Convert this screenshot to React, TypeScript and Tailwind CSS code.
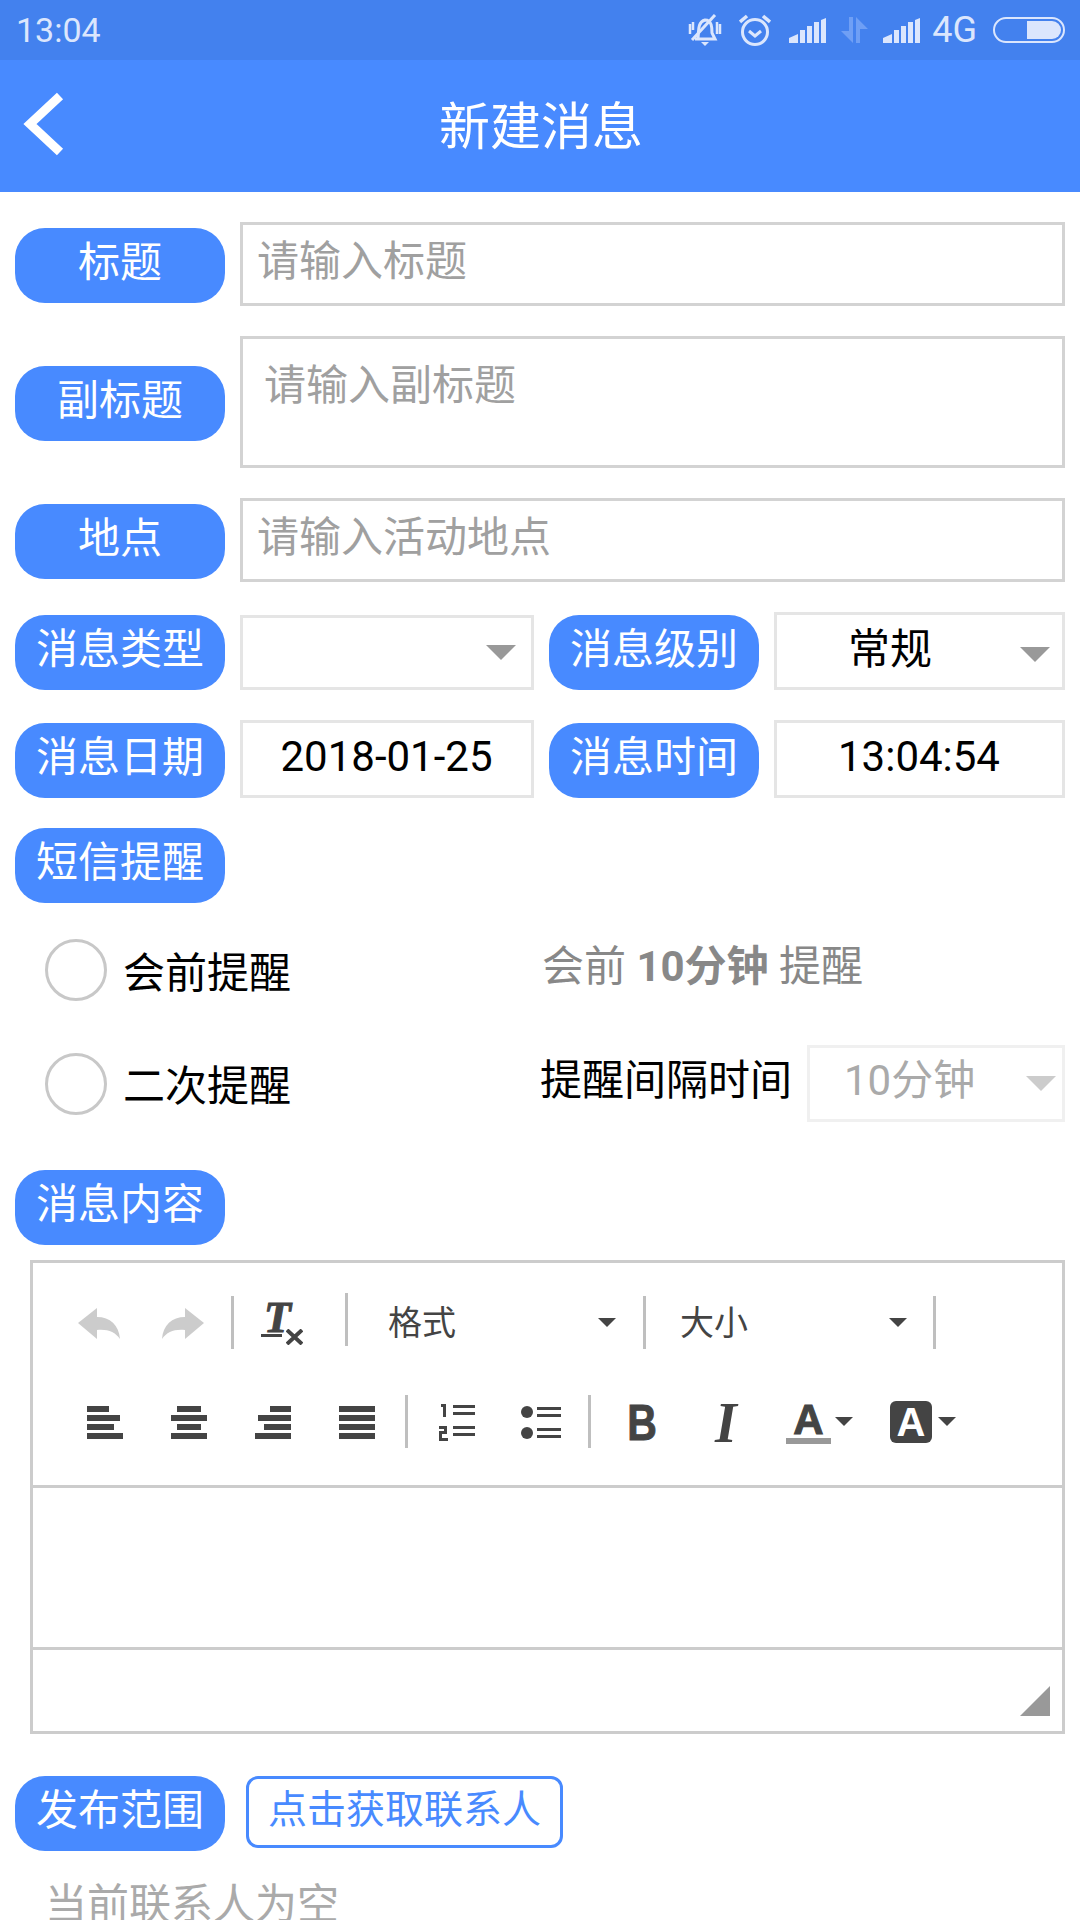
import React from "react";

function Label({ text, className = "" }: { text: string; className?: string }) {
  return (
    <div className={"flex h-[75px] w-[210px] shrink-0 items-center justify-center rounded-[30px] bg-[#488aff] pb-[6px] text-[42px] leading-none text-white " + className}>
      {text}
    </div>
  );
}

function Arrow({ color = "#999999" }: { color?: string }) {
  return (
    <svg width="30" height="15" viewBox="0 0 30 15" className="shrink-0">
      <polygon points="0,0 30,0 15,15" fill={color} />
    </svg>
  );
}

function Caret() {
  return (
    <svg width="18" height="9" viewBox="0 0 18 9" className="shrink-0">
      <polygon points="0,0 18,0 9,9" fill="#444444" />
    </svg>
  );
}

function Sep({ className = "" }: { className?: string }) {
  return <div className={"h-[53px] w-[3px] shrink-0 bg-[#bfbfbf] " + className} />;
}

function Bars({ widths, align }: { widths: number[]; align: "l" | "c" | "r" }) {
  return (
    <svg width="36" height="33" viewBox="0 0 36 33">
      {widths.map((w, i) => (
        <rect key={i} x={align === "l" ? 0 : align === "c" ? (36 - w) / 2 : 36 - w} y={i * 9} width={w} height="6" fill="#444444" />
      ))}
    </svg>
  );
}

function Btn({ children, className = "w-[84px]" }: { children: React.ReactNode; className?: string }) {
  return <div className={"flex h-[53px] shrink-0 items-center justify-center pt-[2px] " + className}>{children}</div>;
}

function Signal() {
  return (
    <svg width="37" height="25" viewBox="0 0 37 25" fill="#dbe6fd">
      <polygon points="0,25 0,20 9,16 9,25" />
      <rect x="11" y="12" width="5" height="13" />
      <rect x="18" y="8" width="5" height="17" />
      <rect x="25" y="4" width="5" height="21" />
      <polygon points="32,2 37,0 37,25 32,25" />
    </svg>
  );
}

export default function App() {
  return (
    <div className="h-[1920px] w-[1080px] overflow-hidden bg-white font-['Roboto','Noto_Sans_CJK_SC',sans-serif] text-black">
      {/* status bar */}
      <div className="flex h-[60px] items-center justify-between bg-[#4381ee] pl-[16px] pr-[15px] text-[#dbe6fd]">
        <span className="text-[34px] leading-none">13:04</span>
        <div className="flex items-center">
          <svg width="34" height="32" viewBox="0 0 34 32" fill="none" stroke="#dbe6fd">
            <path d="M10 24 C11 18 9 8 17 6 C24 6 24 14 24 19 L27 25 L7 25" strokeWidth="3" />
            <path d="M13 28 H21 L17 32 Z" fill="#dbe6fd" stroke="none" />
            <path d="M4 26 L27 1" strokeWidth="3" />
            <path d="M2 10 V20 M5 8 V16 M29 8 V20 M32 10 V20" strokeWidth="2.5" />
          </svg>
          <svg width="32" height="32" viewBox="0 0 32 32" fill="none" stroke="#dbe6fd" strokeWidth="3" className="ml-[17px]">
            <circle cx="16" cy="18" r="12.5" />
            <path d="M10 17 L16 22 L22 17" />
            <path d="M1 8 L8 2 M31 8 L24 2" strokeWidth="3.5" />
          </svg>
          <div className="ml-[18px]"><Signal /></div>
          <svg width="27" height="26" viewBox="0 0 27 26" fill="#6f9ff5" className="ml-[15px]">
            <polygon points="8,0 12,0 12,26 0,14 8,14" />
            <polygon points="15,0 27,12 19,12 19,26 15,26" />
          </svg>
          <div className="ml-[15px]"><Signal /></div>
          <span className="ml-[12px] text-[36px] leading-none">4G</span>
          <div className="ml-[16px] flex h-[26px] w-[72px] items-center justify-end rounded-[13px] border-[2px] border-[#dbe6fd] pr-[2px]">
            <div className="h-[18px] w-[34px] rounded-r-[9px] bg-[#dbe6fd]" />
          </div>
        </div>
      </div>

      {/* header */}
      <div className="grid h-[132px] grid-cols-[1fr_auto_1fr] items-center bg-[#488aff]">
        <svg width="42" height="64" viewBox="0 0 42 64" fill="none" stroke="#ffffff" strokeWidth="9" className="mb-[4px] ml-[23px]">
          <path d="M37 4 L7 32 L37 60" />
        </svg>
        <span className="pl-[2px] pt-[2px] text-[51px] leading-none text-white">新建消息</span>
        <span />
      </div>

      <div className="flex flex-col px-[15px]">
        <div className="mt-[30px] flex h-[84px] items-start gap-[15px]">
          <Label text="标题" className="mt-[6px]" />
          <div className="flex h-[84px] flex-1 items-center border-[3px] border-[#d3d3d3] pb-[4px] pl-[14px] text-[42px] leading-none text-[#a0a0a0]">请输入标题</div>
        </div>

        <div className="mt-[30px] flex h-[132px] items-start gap-[15px]">
          <Label text="副标题" className="mt-[30px]" />
          <div className="h-[132px] flex-1 border-[3px] border-[#d3d3d3] pl-[21px] pt-[26px] text-[42px] leading-none text-[#a0a0a0]">请输入副标题</div>
        </div>

        <div className="mt-[30px] flex h-[84px] items-start gap-[15px]">
          <Label text="地点" className="mt-[6px]" />
          <div className="flex h-[84px] flex-1 items-center border-[3px] border-[#d3d3d3] pb-[4px] pl-[14px] text-[42px] leading-none text-[#a0a0a0]">请输入活动地点</div>
        </div>

        <div className="mt-[30px] flex h-[78px] items-end">
          <Label text="消息类型" />
          <div className="ml-[15px] flex h-[75px] w-[294px] items-center justify-end border-[3px] border-[#e5e5e5] pr-[15px]"><Arrow /></div>
          <Label text="消息级别" className="ml-[15px]" />
          <div className="ml-[15px] flex h-[78px] w-[291px] items-center justify-between border-[3px] border-[#e5e5e5] pl-[71px] pr-[12px]">
            <span className="pb-[3px] text-[42px] leading-none">常规</span>
            <span className="pt-[6px]"><Arrow /></span>
          </div>
        </div>

        <div className="mt-[30px] flex h-[78px] items-end">
          <Label text="消息日期" />
          <div className="ml-[15px] flex h-[78px] w-[294px] items-center justify-center border-[3px] border-[#e5e5e5] pb-[4px] pr-[1px] text-[42px] leading-none">2018-01-25</div>
          <Label text="消息时间" className="ml-[15px]" />
          <div className="ml-[15px] flex h-[78px] w-[291px] items-center justify-center border-[3px] border-[#e5e5e5] pb-[4px] pr-[1px] text-[42px] leading-none">13:04:54</div>
        </div>

        <div className="mt-[30px]"><Label text="短信提醒" /></div>

        <div className="mt-[36px] flex h-[62px] items-center pl-[30px]">
          <div className="h-[62px] w-[62px] shrink-0 rounded-full border-[3px] border-[#c8c8c8]" />
          <span className="ml-[16px] mt-[7px] w-[419px] text-[42px] leading-none">会前提醒</span>
          <span className="mb-[7px] whitespace-pre text-[42px] leading-none text-[#888888]">会前 <b className="font-bold">10分钟</b> 提醒</span>
        </div>

        <div className="mt-[44px] flex h-[77px] items-center pl-[30px]">
          <div className="h-[62px] w-[62px] shrink-0 rounded-full border-[3px] border-[#c8c8c8]" />
          <span className="ml-[16px] mt-[7px] w-[417px] text-[42px] leading-none">二次提醒</span>
          <span className="mb-[6px] shrink-0 whitespace-nowrap text-[42px] leading-none">提醒间隔时间</span>
          <div className="ml-[15px] flex h-[77px] w-[258px] shrink-0 items-center justify-between border-[3px] border-[#f0f0f0] pl-[34px] pr-[6px]">
            <span className="pb-[6px] text-[42px] leading-none text-[#aaaaaa]">10分钟</span>
            <Arrow color="#cccccc" />
          </div>
        </div>

        <div className="mt-[48px]"><Label text="消息内容" /></div>

        {/* editor */}
        <div className="ml-[15px] mt-[15px] h-[474px] border-[3px] border-[#cccccc]">
          <div className="h-[225px] border-b-[3px] border-[#cccccc] pt-[33px]">
            <div className="flex items-center pl-[24px]">
              <Btn>
                <svg width="42" height="31" viewBox="0 0 42 31" fill="#cccccc"><path d="M0 15 L19 0 V9 C32 9 41 17 42 31 C37 24 30 21 19 22 V31 Z" /></svg>
              </Btn>
              <Btn>
                <svg width="42" height="31" viewBox="0 0 42 31" fill="#cccccc"><path d="M42 15 L23 0 V9 C10 9 1 17 0 31 C5 24 12 21 23 22 V31 Z" /></svg>
              </Btn>
              <Sep className="ml-[6px]" />
              <Btn className="ml-[6px] w-[84px]">
                <div className="relative h-[42px] w-[42px]">
                  <span className="absolute left-[3px] top-[-7px] font-['Liberation_Serif',serif] text-[44px] font-bold italic leading-none text-[#444444] [-webkit-text-stroke:1px_#444444]">T</span>
                  <div className="absolute bottom-[8px] left-0 h-[3px] w-[21px] bg-[#444444]" />
                  <svg width="17" height="16" viewBox="0 0 17 16" className="absolute bottom-0 right-0" stroke="#444444" strokeWidth="4"><path d="M1 1 L16 15 M16 1 L1 15" /></svg>
                </div>
              </Btn>
              <Sep className="ml-[21px] -mt-[6px]" />
              <div className="flex h-[53px] w-[295px] shrink-0 items-center justify-between pl-[40px] pr-[27px]">
                <span className="text-[34px] leading-none text-[#444444]">格式</span>
                <Caret />
              </div>
              <Sep />
              <div className="flex h-[53px] w-[287px] shrink-0 items-center justify-between pl-[34px] pr-[26px]">
                <span className="text-[34px] leading-none text-[#444444]">大小</span>
                <Caret />
              </div>
              <Sep />
            </div>
            <div className="mt-[46px] flex items-center pl-[30px]">
              <Btn><Bars widths={[22, 33, 27, 36]} align="l" /></Btn>
              <Btn><Bars widths={[24, 36, 24, 36]} align="c" /></Btn>
              <Btn><Bars widths={[21, 33, 27, 36]} align="r" /></Btn>
              <Btn><Bars widths={[36, 36, 36, 36]} align="l" /></Btn>
              <Sep className="ml-[6px]" />
              <Btn className="ml-[6px] w-[84px]">
                <svg width="37" height="37" viewBox="0 0 37 37" fill="#444444">
                  <path d="M3 0 H8 V13 H5 V3 H3 Z" />
                  <path d="M1 22 H9 V30 H4 V34 H10 V37 H1 V27 H6 V25 H1 Z" />
                  <rect x="15" y="1" width="22" height="3" />
                  <rect x="15" y="8" width="22" height="3" />
                  <rect x="15" y="22" width="22" height="3" />
                  <rect x="15" y="29" width="22" height="3" />
                </svg>
              </Btn>
              <Btn className="ml-[1px] w-[84px]">
                <svg width="40" height="33" viewBox="0 0 40 33" fill="#444444">
                  <circle cx="6" cy="6" r="6" />
                  <circle cx="6" cy="27" r="6" />
                  <rect x="16" y="1" width="24" height="3" />
                  <rect x="16" y="8" width="24" height="3" />
                  <rect x="16" y="22" width="24" height="3" />
                  <rect x="16" y="29" width="24" height="3" />
                </svg>
              </Btn>
              <Sep className="ml-[5px]" />
              <Btn className="ml-[12px] w-[78px]">
                <span className="scale-x-[0.82] font-['Liberation_Sans',sans-serif] text-[50px] font-bold leading-none text-[#444444] [-webkit-text-stroke:1px_#444444]">B</span>
              </Btn>
              <Btn className="w-[90px]">
                <span className="font-['Liberation_Serif',serif] text-[56px] font-bold italic leading-none text-[#444444]">I</span>
              </Btn>
              <div className="ml-[15px] flex h-[42px] w-[45px] shrink-0 flex-col items-center pt-[2px]">
                <span className="h-[34px] font-['Liberation_Sans',sans-serif] text-[42px] font-bold leading-[34px] text-[#444444] [-webkit-text-stroke:1px_#444444]">A</span>
                <div className="mt-[1px] h-[6px] w-[45px] shrink-0 bg-[#999999]" />
              </div>
              <div className="ml-[4px]"><Caret /></div>
              <div className="ml-[37px] flex h-[42px] w-[42px] shrink-0 items-center justify-center rounded-[6px] bg-[#444444]">
                <span className="font-['Liberation_Sans',sans-serif] text-[40px] font-bold leading-none text-white">A</span>
              </div>
              <div className="ml-[6px]"><Caret /></div>
            </div>
          </div>
          <div className="h-[162px] border-b-[3px] border-[#cccccc]" />
          <div className="flex h-[81px] items-end justify-end pb-[15px] pr-[12px]">
            <svg width="30" height="30" viewBox="0 0 30 30"><polygon points="30,0 30,30 0,30" fill="#999999" /></svg>
          </div>
        </div>

        <div className="mt-[42px] flex items-start">
          <Label text="发布范围" />
          <div className="ml-[21px] flex h-[72px] w-[317px] items-center justify-center rounded-[12px] border-[3px] border-[#488aff] pb-[4px] text-[39px] leading-none text-[#488aff]">点击获取联系人</div>
        </div>

        <div className="mt-[33px] pl-[30px] text-[42px] leading-none text-[#aaaaaa]">当前联系人为空</div>
      </div>
    </div>
  );
}
